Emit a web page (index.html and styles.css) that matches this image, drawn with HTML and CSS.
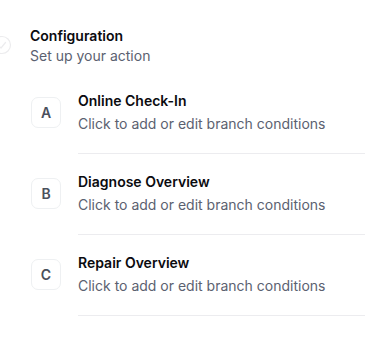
FILE: index.html
```html
<!DOCTYPE html>
<html>
<head>
<meta charset="utf-8">
<link rel="stylesheet" href="styles.css">
</head>
<body>
<div class="panel">
  <svg class="step-icon" width="20" height="20" viewBox="0 0 20 20"><circle cx="10" cy="10" r="8.5" fill="none" stroke="#ececee" stroke-width="1.2"/><path d="M6.5 10.5 L9 13 L13.5 7.5" fill="none" stroke="#ececee" stroke-width="1.2" stroke-linecap="round" stroke-linejoin="round"/></svg>
  <div class="header">
    <div class="h-title">Configuration</div>
    <div class="h-sub">Set up your action</div>
  </div>
  <div class="list">
    <div class="item">
      <div class="badge">A</div>
      <div class="body">
        <div class="title">Online Check-In</div>
        <div class="desc">Click to add or edit branch conditions</div>
      </div>
    </div>
    <div class="item">
      <div class="badge">B</div>
      <div class="body">
        <div class="title">Diagnose Overview</div>
        <div class="desc">Click to add or edit branch conditions</div>
      </div>
    </div>
    <div class="item">
      <div class="badge">C</div>
      <div class="body">
        <div class="title">Repair Overview</div>
        <div class="desc">Click to add or edit branch conditions</div>
      </div>
    </div>
  </div>
</div>
</body>
</html>
```
FILE: styles.css
```css
html, body { margin: 0; padding: 0; background: #fff; }
body { font-family: Inter, "Noto Sans", sans-serif; width: 365px; height: 337px; overflow: hidden; }
.panel { position: relative; padding: 27px 0 0 30px; }
.step-icon { position: absolute; left: -8px; top: 35px; }
.h-title { font-size: 14px; font-weight: 600; color: #0b0b0f; line-height: 18px; }
.h-sub { font-size: 14px; color: #5b6170; line-height: 20px; margin-top: 1px; }
.list { margin-top: 26px; display: flex; flex-direction: column; }
.item { display: flex; gap: 17px; }
.badge { width: 30px; height: 31px; margin-top: 5px; flex: none; border: 1px solid #eef0f2; border-radius: 7px; display: flex; align-items: center; justify-content: center; font-size: 14px; font-weight: 600; color: #4a505c; box-sizing: border-box; margin-left: 1px; }
.body { flex: 1; border-bottom: 1px solid #ececef; padding-bottom: 19px; margin-bottom: 19px; }
.title { font-size: 14px; font-weight: 600; color: #0b0b0f; line-height: 18px; }
.desc { font-size: 14px; color: #5b6170; line-height: 20px; margin-top: 4px; }
```
